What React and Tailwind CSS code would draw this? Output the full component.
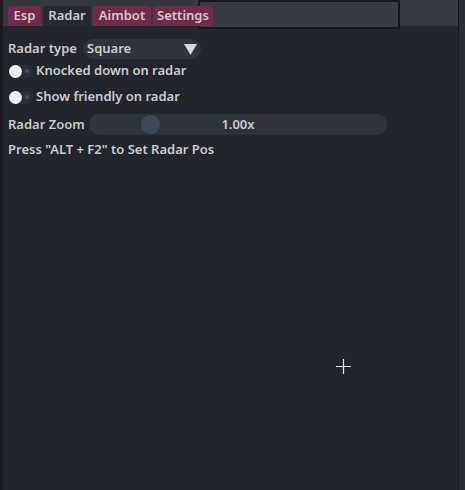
import React from "react";

function Tab({ label, active, w }) {
  return (
    <div
      className={
        "h-[20px] flex items-center justify-center rounded-t-[3px] " +
        w +
        (active ? " bg-[#262930] text-[#cfd0d4]" : " bg-[#6e2c48] text-[#d7c9cf]")
      }
    >
      {label}
    </div>
  );
}

function Toggle() {
  return (
    <div className="relative w-[24px] h-[13px] rounded-full bg-[#2b2e35]">
      <div className="absolute left-0 top-0 w-[13px] h-[13px] rounded-full bg-[#f2f2f2]" />
      <div className="absolute left-[16px] top-[4px] w-[4px] h-[4px] rounded-full bg-[#4a4d55]" />
    </div>
  );
}

export default function App() {
  return (
    <div
      className="w-[465px] h-[490px] bg-[#2a2c32] flex text-[13px] font-semibold"
      style={{ fontFamily: '"Noto Sans", "Open Sans", sans-serif' }}
    >
      <div className="w-[3px] bg-[#1b1c21]" />
      <div className="w-[456px] h-full bg-[#22252c] flex flex-col border-r border-[#17181d] relative">
        <div className="absolute left-[195px] top-0 w-[202px] h-[29px] border-2 border-[#16161f] bg-[#3a3b42]" />
        <div className="h-[26px] bg-[#37383e] flex items-end pl-[5px]">
          <div className="relative z-10 flex items-end gap-[2px]">
            <Tab label="Esp" w="w-[33px]" />
            <Tab label="Radar" w="w-[48px]" active />
            <Tab label="Aimbot" w="w-[58px]" />
            <Tab label="Settings" w="w-[60px]" />
          </div>
        </div>
        <div className="flex flex-col pl-[5px] pt-[13px] text-[#cbccd0]">
          <div className="flex items-center h-[20px]">
            <span className="w-[75px]">Radar type</span>
            <div className="w-[118px] h-[20px] rounded-full bg-[#2f343b] flex items-center justify-between pl-[4px] pr-[4px]">
              <span>Square</span>
              <svg width="13" height="11" viewBox="0 0 13 11">
                <polygon points="0,0 13,0 6.5,11" fill="#d6d8dc" />
              </svg>
            </div>
          </div>
          <div className="flex items-center gap-[3px] h-[14px] mt-[5px] ml-[1px]">
            <Toggle />
            <span>Knocked down on radar</span>
          </div>
          <div className="flex items-center gap-[3px] h-[14px] mt-[12px] ml-[1px]">
            <Toggle />
            <span>Show friendly on radar</span>
          </div>
          <div className="flex items-center h-[21px] mt-[10px]">
            <span className="w-[81px]">Radar Zoom</span>
            <div className="relative w-[298px] h-[21px] rounded-full bg-[#2f343b] flex items-center justify-center">
              <div className="absolute left-[52px] top-[1px] w-[19px] h-[19px] rounded-full bg-[#3e4b56]" />
              <span className="relative">1.00x</span>
            </div>
          </div>
          <div className="mt-[5px] h-[20px] flex items-center">Press "ALT + F2" to Set Radar Pos</div>
        </div>
        <svg className="absolute left-[333px] top-[359px]" width="15" height="15" viewBox="0 0 15 15">
          <path d="M7.5 0V15M0 7.5H15" stroke="#e8e8e8" strokeWidth="1.2" />
        </svg>
      </div>
    </div>
  );
}
